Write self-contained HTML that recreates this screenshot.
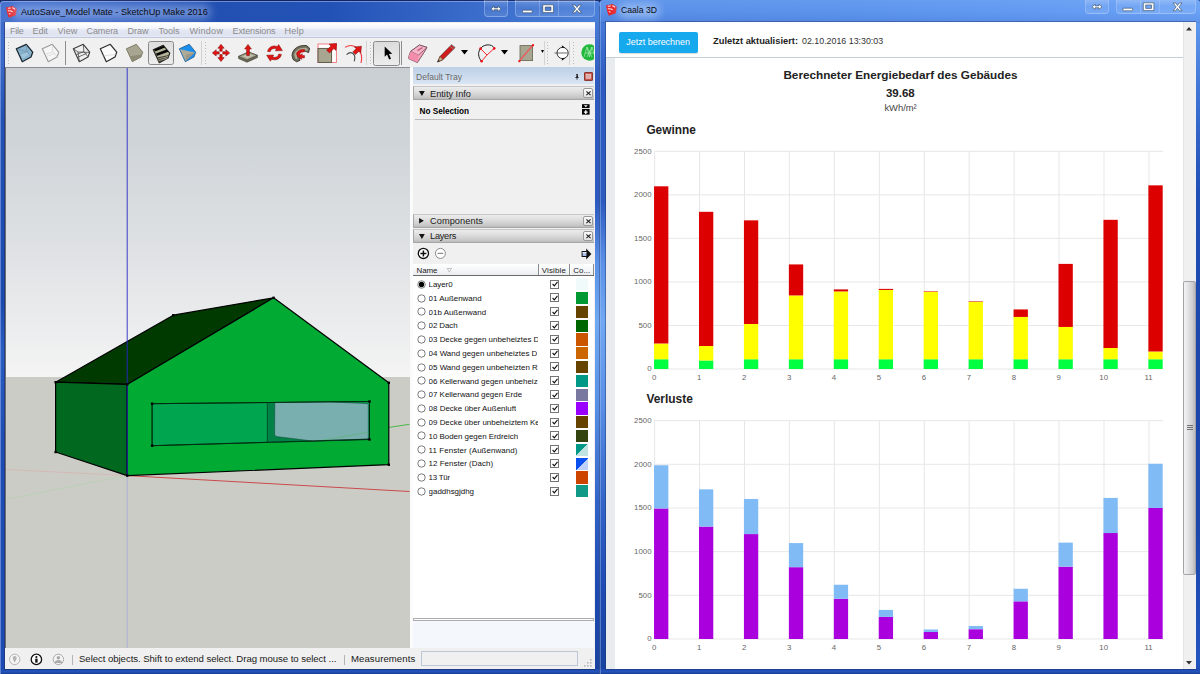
<!DOCTYPE html>
<html><head><meta charset="utf-8"><title>SketchUp Caala 3D</title>
<style>
html,body{margin:0;padding:0;}
body{width:1200px;height:674px;overflow:hidden;position:relative;background:#1a3a8c;font-family:"Liberation Sans", sans-serif;}
.t{position:absolute;white-space:nowrap;}
svg{position:absolute;overflow:visible;}
</style></head><body>
<div style="position:absolute;left:0.00px;top:0.00px;width:600.00px;height:674.00px;background:#10245e;"></div>
<div style="position:absolute;left:0.00px;top:0.00px;width:600.00px;height:674.00px;background:linear-gradient(90deg,#4873cf 0,#3b66c4 18%,#2250b2 36%,#2352b6 55%,#396bca 78%,#4a80da 100%);border-radius:4px 4px 0 0;"></div>
<div style="position:absolute;left:0.00px;top:22.00px;width:5.50px;height:652.00px;background:linear-gradient(180deg,#3f6bca 0,#3d69c8 40px,#2451b4 95px,#1c49ae 280px,#2a5cc4 330px,#1e4cb4 420px,#1d4ab2 100%);"></div>
<div style="position:absolute;left:594.30px;top:22.00px;width:5.70px;height:652.00px;background:linear-gradient(180deg,#467ad8 0,#2d5ac0 60px,#2c5abf 180px,#5a90e6 240px,#70a8f2 300px,#5a90e6 380px,#3264c8 480px,#1e4bb4 560px,#19429f 100%);"></div>
<div style="position:absolute;left:0.00px;top:669.00px;width:600.00px;height:5.00px;background:linear-gradient(180deg,#1f4cb2,#2553ba 60%,#183a90);"></div>
<div style="position:absolute;left:0.00px;top:0.00px;width:600.00px;height:674.00px;border-top:1px solid rgba(12,22,80,.8);border-radius:4px 4px 0 0;box-sizing:border-box;"></div>
<div style="position:absolute;left:0.00px;top:1.00px;width:600.00px;height:673.00px;border-top:1px solid rgba(170,195,245,.55);border-left:1px solid rgba(150,180,240,.55);border-radius:4px 4px 0 0;box-sizing:border-box;"></div>
<div style="position:absolute;left:599.30px;top:6.00px;width:0.90px;height:668.00px;background:rgba(60,80,130,.55);"></div>
<div style="position:absolute;left:4.40px;top:21.60px;width:590.40px;height:648.00px;border:1px solid rgba(30,45,100,.55);box-sizing:border-box;"></div>
<svg style="left:5.8px;top:6.0px" width="11" height="12" viewBox="0 0 11 12"><path d="M0 1.5 L6.8 0 L10.8 3 L9.8 9.3 L2.8 11.7 L1.2 7.6 Z" fill="#e8262a"/><path d="M1.8 2.3 L4.8 2 M6.2 1.8 C7.4 1.9 8.4 2.6 9 3.4" stroke="#fff" stroke-width="1.1" fill="none" opacity=".92"/><path d="M1.8 4.9 C3.4 4.6 5.4 5 6.6 5.8" stroke="#fff" stroke-width="1.1" fill="none" opacity=".92"/><path d="M2.8 7.6 L4.6 8" stroke="#fff" stroke-width="1" fill="none" opacity=".9"/></svg>
<div style="position:absolute;left:12.00px;top:5.00px;width:199.00px;height:14.00px;background:rgba(200,220,255,.40);filter:blur(4px);border-radius:8px;"></div>
<span class="t" id="t0" style="left:21.00px;top:5.70px;font-size:9.09px;line-height:13px;color:#0a0a14;">AutoSave_Model Mate - SketchUp Make 2016</span>
<div style="position:absolute;left:483.50px;top:0.00px;width:24.00px;height:16.50px;border:1px solid rgba(190,212,250,.38);border-top:none;border-radius:0 0 4px 4px;box-sizing:border-box;background:linear-gradient(180deg,rgba(255,255,255,.22),rgba(255,255,255,.05) 50%,rgba(255,255,255,.12));"></div><div style="position:absolute;left:515.00px;top:0.00px;width:80.00px;height:16.50px;border:1px solid rgba(190,212,250,.38);border-top:none;border-radius:0 0 4px 4px;box-sizing:border-box;background:linear-gradient(180deg,rgba(255,255,255,.22),rgba(255,255,255,.05) 50%,rgba(255,255,255,.12));"></div><div style="position:absolute;left:538.50px;top:0.00px;width:1.00px;height:15.50px;background:rgba(190,212,250,.32);"></div><div style="position:absolute;left:558.00px;top:0.00px;width:1.00px;height:15.50px;background:rgba(190,212,250,.32);"></div><svg style="left:483.5px;top:0.0px" width="113" height="18" viewBox="0 0 113 18" fill="#fff" stroke="#345" stroke-width=".6"><path d="M7.0 8.8 l3.2 -2.6 v1.7 h3.6 v-1.7 l3.2 2.6 l-3.2 2.6 v-1.7 h-3.6 v1.7 z"/><rect x="38.5" y="10.2" width="9.6" height="2.6" rx=".5"/><path fill-rule="evenodd" d="M58.8 4.8 h10.6 v7.8 h-10.6 z m2.4 2.2 v3.4 h5.8 v-3.4 z"/><path d="M88.5 5 h2.6 l1.9 2.5 l1.9 -2.5 h2.6 l-3.2 3.9 l3.2 3.9 h-2.6 l-1.9 -2.5 l-1.9 2.5 h-2.6 l3.2 -3.9 z"/></svg>
<div style="position:absolute;left:5.00px;top:22.00px;width:589.50px;height:647.00px;background:#f0f0f0;"></div>
<div style="position:absolute;left:5.00px;top:22.60px;width:589.50px;height:15.60px;background:linear-gradient(180deg,#ffffff 0,#f4f6fc 35%,#e4e8f4 50%,#dfe3f1 85%,#e6e9f5 100%);border-bottom:1px solid #c3c9dc;box-sizing:border-box;"></div>
<span class="t" id="t1" style="left:10.00px;top:24.90px;font-size:9.05px;line-height:13px;color:#8c8c8c;letter-spacing:-0.250px;">File</span>
<span class="t" id="t2" style="left:32.50px;top:24.90px;font-size:9.05px;line-height:13px;color:#8c8c8c;letter-spacing:-0.086px;">Edit</span>
<span class="t" id="t3" style="left:57.50px;top:24.90px;font-size:9.05px;line-height:13px;color:#8c8c8c;letter-spacing:0.133px;">View</span>
<span class="t" id="t4" style="left:86.50px;top:24.90px;font-size:9.05px;line-height:13px;color:#8c8c8c;letter-spacing:-0.116px;">Camera</span>
<span class="t" id="t5" style="left:127.50px;top:24.90px;font-size:9.05px;line-height:13px;color:#8c8c8c;">Draw</span>
<span class="t" id="t6" style="left:158.50px;top:24.90px;font-size:9.05px;line-height:13px;color:#8c8c8c;">Tools</span>
<span class="t" id="t7" style="left:189.50px;top:24.90px;font-size:9.05px;line-height:13px;color:#8c8c8c;letter-spacing:0.250px;">Window</span>
<span class="t" id="t8" style="left:232.50px;top:24.90px;font-size:9.05px;line-height:13px;color:#8c8c8c;letter-spacing:-0.129px;">Extensions</span>
<span class="t" id="t9" style="left:284.50px;top:24.90px;font-size:9.05px;line-height:13px;color:#8c8c8c;letter-spacing:0.220px;">Help</span>
<div style="position:absolute;left:5.00px;top:38.00px;width:589.50px;height:29.00px;background:#f0f0f0;"></div>
<div style="position:absolute;left:7.60px;top:41.50px;width:2.00px;height:23.00px;background:repeating-linear-gradient(180deg,#bcbcbc 0,#bcbcbc 1px,transparent 1px,transparent 3px);width:1.4px;"></div>
<svg style="left:16.0px;top:44.0px" width="17" height="18" viewBox="0 0 17 18" stroke-linejoin="round"><polygon points="0.3,4.8 10.3,0.3 16.7,8.2 15.0,13.0 6.3,17.7" fill="#8bb4cf" stroke="#1c2830" stroke-width="1.3"/><polygon points="4.5,9.5 10.8,7.6 12.8,11.0 6.6,14.0" fill="#9fc4dc"/><path d="M10.3 0.8 L10.8 7.6 L1 5 M10.8 7.6 L15 12.4 M2.9 10.4 L12 7.4" stroke="#6e93ad" stroke-width=".7" fill="none"/></svg>
<svg style="left:42.0px;top:44.0px" width="17" height="18" viewBox="0 0 17 18" stroke-linejoin="round"><polygon points="0.3,4.8 10.3,0.3 16.7,8.2 15.0,13.0 6.3,17.7" fill="#f6f6f6" stroke="#9a9a9a" stroke-width="1.1"/><path d="M10.3 0.8 L10.8 7.8 L3 10.4 M10.8 7.8 L15 12.6 M4.6 12.5 L13 9.2" stroke="#d2d2d2" stroke-width=".7" fill="none"/></svg>
<div style="position:absolute;left:65.20px;top:41.00px;width:1.00px;height:24.00px;background:#8e8e8e;"></div>
<svg style="left:73.0px;top:44.0px" width="17" height="18" viewBox="0 0 17 18" stroke-linejoin="round"><polygon points="0.3,4.8 10.3,0.3 16.7,8.2 15.0,13.0 6.3,17.7" fill="none" stroke="#3c3c3c" stroke-width="1.1"/><path d="M10.3 0.8 L10.9 7.6 L15 12.8 M10.9 7.6 L3.4 10.6 M0.6 5 L5 8 L6.3 17.4 M5 8 L16.4 8.4 M4.4 13.4 L13.6 9.4" stroke="#4a4a4a" stroke-width=".8" fill="none"/></svg>
<svg style="left:100.0px;top:44.0px" width="17" height="18" viewBox="0 0 17 18" stroke-linejoin="round"><polygon points="0.3,4.8 10.3,0.3 16.7,8.2 15.0,13.0 6.3,17.7" fill="#fbfbfb" stroke="#2a2a2a" stroke-width="1.2"/><path d="M3.6 11.8 L15.6 10.4" stroke="#d8d8d8" stroke-width=".8" fill="none"/></svg>
<svg style="left:126.0px;top:44.0px" width="17" height="18" viewBox="0 0 17 18" stroke-linejoin="round"><polygon points="0.3,4.8 10.3,0.3 16.7,8.2 15.0,13.0 6.3,17.7" fill="#a8a690" stroke="#77755f" stroke-width=".9"/><polygon points="3.8,12.2 15.6,10.6 15.0,13.0 6.3,17.7" fill="#8e8c76"/></svg>
<div style="position:absolute;left:148.10px;top:40.80px;width:25.80px;height:24.70px;background:linear-gradient(#dedede,#ececec);border:1px solid #8a8a8a;border-radius:2.5px;box-sizing:border-box;"></div>
<svg style="left:153.0px;top:44.6px" width="17" height="18" viewBox="0 0 17 18" stroke-linejoin="round"><polygon points="0.3,4.8 10.3,0.3 16.7,8.2 15.0,13.0 6.3,17.7" fill="#b5b39c" stroke="#20201a" stroke-width="1.1"/><path d="M1 4.6 L10.3 0.7 L12 2.6 L2 6.6 Z M3 8.6 L13.6 4.6 L15.4 6.8 L3.8 11 Z" fill="#060606"/><polygon points="4.2,12.6 15.8,10.0 15.0,13.0 6.3,17.7" fill="#3a382e"/><path d="M4.8 14 L15.2 11.4 M5.6 15.8 L14.6 13" stroke="#b5b39c" stroke-width=".8"/></svg>
<svg style="left:179.0px;top:44.0px" width="17" height="18" viewBox="0 0 17 18" stroke-linejoin="round"><polygon points="0.3,4.8 10.3,0.3 16.7,8.2 15.0,13.0 6.3,17.7" fill="#1b8fee" stroke="#1c5a8c" stroke-width=".8"/><polygon points="1.0,5.2 15.8,8.6 6.6,17.0" fill="#aeac98"/><polygon points="6.6,17.0 15.8,8.6 6.8,11.0" fill="#9a9884"/></svg>
<div style="position:absolute;left:200.80px;top:41.00px;width:1.00px;height:24.00px;background:#d2d2d2;"></div>
<div style="position:absolute;left:205.00px;top:41.50px;width:2.00px;height:23.00px;background:repeating-linear-gradient(180deg,#bcbcbc 0,#bcbcbc 1px,transparent 1px,transparent 3px);width:1.4px;"></div>
<svg style="left:212px;top:44px" width="18" height="18" viewBox="0 0 18 18"><g fill="#e01414" stroke="#7a0808" stroke-width=".5"><path d="M9 0.3 L12.2 4.2 H10.2 V7.2 H7.8 V4.2 H5.8 Z"/><path d="M9 17.5 L12.2 13.6 H10.2 V10.6 H7.8 V13.6 H5.8 Z"/><path d="M0.3 8.9 L4.2 5.7 V7.7 H7.2 V10.1 H4.2 V12.1 Z"/><path d="M17.7 8.9 L13.8 5.7 V7.7 H10.8 V10.1 H13.8 V12.1 Z"/></g></svg>
<svg style="left:237.5px;top:43.5px" width="20" height="19" viewBox="0 0 20 19"><polygon points="0.6,12.4 10.6,8 19.4,11.4 19.4,13.6 9,18.2 0.6,14.6" fill="#6e6c5a" stroke="#3a382e" stroke-width=".6"/><polygon points="0.6,12.4 10.6,8 19.4,11.4 9,16" fill="#a8a690" stroke="#3a382e" stroke-width=".6"/><polygon points="4.6,12.2 10.4,9.8 15.6,11.6 9.4,14.2" fill="#c4c2ae"/><path d="M10 0.4 L13.4 5 H11.4 V11.6 H8.6 V5 H6.6 Z" fill="#e01414" stroke="#7a0808" stroke-width=".5"/></svg>
<svg style="left:264.5px;top:44px" width="19" height="18" viewBox="0 0 19 18"><path d="M2.6 7.4 C3.4 3 8 0.8 12.4 2.6 L13.6 0.6 L17.4 6.6 L10.4 6.8 L11.4 4.8 C8.6 3.8 5.8 5 5.2 7.8 Z" fill="#e01414" stroke="#7a0808" stroke-width=".5"/><path d="M16.4 10.4 C15.6 14.8 11 17 6.6 15.2 L5.4 17.2 L1.6 11.2 L8.6 11 L7.6 13 C10.4 14 13.2 12.8 13.8 10 Z" fill="#e01414" stroke="#7a0808" stroke-width=".5"/></svg>
<svg style="left:290.5px;top:44px" width="20" height="19" viewBox="0 0 20 19"><path d="M1 11.5 C1.4 4.5 8 0.6 15.6 1.6 L18.6 4.2 L17.6 8.6 L14.6 7.4 C11 6.2 8 8 7.8 11.6 L9 16.4 L5.6 17.8 L2 15.4 Z" fill="#6e6c5a" stroke="#2a2820" stroke-width=".8"/><path d="M3.2 10.8 C4 6 9 3.2 15.2 3.8 L17 5.4 L16.4 7 C11 5 6.4 7.6 6 12.4 L6.6 15.6 L4.4 14.6 Z" fill="#aeac98"/><path d="M5.4 9.6 C7 5.6 11 5 14 5.8 L13.2 8 C11 7.6 9 8.4 8.2 10.6 L9.4 10.8 L11.4 9.8 L11 11.4 L13.6 11.6 L13.4 14 L10.6 13.8 L10.8 15.4 L6.4 12.6 Z" fill="#e01414" stroke="#7a0808" stroke-width=".4"/></svg>
<svg style="left:317px;top:43px" width="21" height="21" viewBox="0 0 21 21"><rect x="1" y="1" width="18.4" height="18.4" fill="#fff" stroke="#f07078" stroke-width=".9"/><rect x="1" y="5.4" width="13.6" height="14" fill="#a8a690" stroke="#55533f" stroke-width=".9"/><path d="M19.6 0.4 L19 7.4 L16.8 5.6 L12.6 10 L9.6 7.2 L14 3 L12 1.2 Z" fill="#e01414" stroke="#7a0808" stroke-width=".5"/></svg>
<svg style="left:343.5px;top:43.5px" width="20" height="20" viewBox="0 0 20 20"><path d="M1 3.4 C10 -2 20 6 17 19" fill="none" stroke="#ee3a40" stroke-width="1.1"/><path d="M2.6 10.6 C7 6.4 12.6 9.6 10.2 17.4" fill="none" stroke="#4a4a4a" stroke-width="1.1"/><path d="M17.4 2.2 L16.8 8.8 L14.8 7.2 L11.6 10.6 L8.8 8 L12.2 4.6 L10.4 3 Z" fill="#e01414" stroke="#7a0808" stroke-width=".5"/></svg>
<div style="position:absolute;left:366.30px;top:41.00px;width:1.00px;height:24.00px;background:#d2d2d2;"></div>
<div style="position:absolute;left:370.00px;top:41.50px;width:2.00px;height:23.00px;background:repeating-linear-gradient(180deg,#bcbcbc 0,#bcbcbc 1px,transparent 1px,transparent 3px);width:1.4px;"></div>
<div style="position:absolute;left:373.00px;top:40.80px;width:27.20px;height:24.80px;background:linear-gradient(#dcdcdc,#ececec);border:1px solid #8a8a8a;border-radius:2.5px;box-sizing:border-box;"></div>
<svg style="left:383.6px;top:46.2px" width="9.4" height="14.6" viewBox="0 0 11 17"><path d="M0.8 0.6 L0.8 12.6 L3.6 10 L6 15.8 L8.2 14.8 L5.8 9.2 L9.6 9 Z" fill="#000"/></svg>
<div style="position:absolute;left:401.30px;top:41.00px;width:1.00px;height:24.00px;background:#8e8e8e;"></div>
<svg style="left:408px;top:43.5px" width="20" height="20" viewBox="0 0 20 20" stroke-linejoin="round"><polygon points="0.8,12.4 2.6,7.4 11.4,1 19,3.4 16,8.6 9.4,18.6 0.8,14.8" fill="#f6a4bc" stroke="#5a3a44" stroke-width=".8"/><polygon points="2.6,7.4 11.4,1 19,3.4 10.4,11.2" fill="#f8b4c8" stroke="#5a3a44" stroke-width=".6"/><polygon points="0.8,12.4 2.6,7.4 10.4,11.2 9.4,18.6 0.8,14.8" fill="#f48cac"/><path d="M9.4 6.6 L14.4 3.6" stroke="#c06484" stroke-width="1.4"/></svg>
<svg style="left:436.5px;top:44px" width="19" height="19" viewBox="0 0 19 19"><path d="M0.6 18 L3 12.6 L14.6 0.8 L18 3.6 L6 15.6 Z" fill="#d41c1c" stroke="#4a1010" stroke-width=".7"/><path d="M0.6 18 L3 12.6 L6 15.6 Z" fill="#c8b48c" stroke="#4a3a20" stroke-width=".5"/><path d="M0.6 18 L1.6 15.8 L2.8 17 Z" fill="#222"/><path d="M13.2 2.4 L16.6 5.2 M14.6 0.8 L18 3.6" stroke="#8a8a8a" stroke-width="1"/></svg>
<svg style="left:461.0px;top:49.6px" width="7" height="4.6" viewBox="0 0 7 4.4"><path d="M0 0 H7 L3.5 4.4 Z" fill="#000"/></svg>
<svg style="left:476.5px;top:43.5px" width="19" height="19" viewBox="0 0 19 19"><path d="M4.4 17.2 C-1 11 1.6 2 10 0.9 C13.4 0.5 16 2 17.6 4" fill="none" stroke="#222" stroke-width="1"/><path d="M3.4 4.6 L10 11 L17.4 4.2 M10 11 L4.6 17.2" fill="none" stroke="#f02830" stroke-width="1"/><circle cx="3.6" cy="4.6" r="1.3" fill="#f01018"/><circle cx="17.2" cy="4.4" r="1.3" fill="#f01018"/><circle cx="4.6" cy="17.2" r="1.3" fill="#f01018"/></svg>
<svg style="left:500.7px;top:49.6px" width="7" height="4.6" viewBox="0 0 7 4.4"><path d="M0 0 H7 L3.5 4.4 Z" fill="#000"/></svg>
<svg style="left:517.5px;top:44px" width="17" height="19" viewBox="0 0 17 19"><rect x="2" y="1.6" width="12.6" height="15" fill="#a8a690" stroke="#66644f" stroke-width=".8"/><path d="M1.2 17.2 L15 1.2" stroke="#f03038" stroke-width="1.2"/><path d="M1.2 17.2 L15 1.2" stroke="#f8b0b4" stroke-width=".4"/><rect x="0.4" y="16.2" width="2" height="2" fill="#f01018"/><rect x="14" y="0.2" width="2" height="2" fill="#f01018"/></svg>
<svg style="left:540.6px;top:50.4px" width="3" height="3" viewBox="0 0 3 3"><path d="M0 0 H3 L1.5 3 Z" fill="#000"/></svg>
<div style="position:absolute;left:543.80px;top:41.00px;width:1.00px;height:24.00px;background:#d2d2d2;"></div>
<div style="position:absolute;left:547.00px;top:41.50px;width:2.00px;height:23.00px;background:repeating-linear-gradient(180deg,#bcbcbc 0,#bcbcbc 1px,transparent 1px,transparent 3px);width:1.4px;"></div>
<svg style="left:554.4px;top:43.6px" width="14" height="18" viewBox="0 0 14 18"><circle cx="8.6" cy="9" r="5.6" fill="#fff" stroke="#222" stroke-width=".9"/><path d="M0.6 9 H13.6" stroke="#444" stroke-width=".8"/><path d="M7.6 1.2 L11 3.4 L8.4 4 Z M7.6 16.8 L11 14.6 L8.4 14 Z" fill="#000"/></svg>
<div style="position:absolute;left:569.30px;top:41.00px;width:1.00px;height:24.00px;background:#d2d2d2;"></div>
<div style="position:absolute;left:572.50px;top:41.50px;width:2.00px;height:23.00px;background:repeating-linear-gradient(180deg,#bcbcbc 0,#bcbcbc 1px,transparent 1px,transparent 3px);width:1.4px;"></div>
<div style="position:absolute;left:581.40px;top:44.20px;width:12.90px;height:17.00px;overflow:hidden;"><svg style="left:0;top:0" width="17" height="17" viewBox="0 0 17 17"><circle cx="8.5" cy="8.5" r="8.2" fill="#22b83c"/><path d="M3 13 L6 3 L8.5 13 L11 3 L14 13 M4 9 H13 M6 3 L11 13 M11 3 L6 13" stroke="#b8f0c0" stroke-width=".6" fill="none"/></svg></div>
<div style="position:absolute;left:5.00px;top:67.00px;width:404.50px;height:581.00px;background:#ccccc6;overflow:hidden;border-top:1px solid #8a8d92;border-left:1px solid #6e6f73;box-sizing:border-box;"><div style="position:absolute;left:0.00px;top:0.00px;width:420.00px;height:309.00px;background:linear-gradient(180deg,#c9cfd3 0,#d0d5d9 25%,#dde0e3 55%,#ecedee 85%,#f4f4f4 100%);"></div></div>
<svg style="left:0;top:0" width="600" height="674" viewBox="0 0 600 674"><line x1="127.2" y1="475.6" x2="6" y2="469.5" stroke="#dca0a0" stroke-width=".9" stroke-dasharray="1 1"/><line x1="127.2" y1="475.6" x2="6" y2="499.3" stroke="#a0d4a0" stroke-width=".9" stroke-dasharray="1 1"/><line x1="127.2" y1="475.6" x2="127.2" y2="648" stroke="#a8a8dc" stroke-width=".8"/><line x1="127.2" y1="475.6" x2="409.5" y2="491.5" stroke="#c83c3c" stroke-width=".9"/><line x1="409.5" y1="424.3" x2="388.8" y2="427.4" stroke="#3cb43c" stroke-width=".9"/><polygon points="55.6,382.2 173.3,315.2 273.6,297.8 127.2,384.4" fill="#003a00" stroke="#000" stroke-width="1.2" stroke-linejoin="round"/><polygon points="55.6,382.2 127.2,384.4 127.2,475.6 55.6,452" fill="#00691f" stroke="#000" stroke-width="1.2" stroke-linejoin="round"/><polygon points="127.2,384.4 273.6,297.8 388.8,382.8 388.8,464.7 127.2,475.6" fill="#00aa33" stroke="#000" stroke-width="1.2" stroke-linejoin="round"/><polygon points="152.1,403.7 369.5,401.5 369.5,439.5 152.1,445.7" fill="#00a550" stroke="#002a10" stroke-width=".9"/><polygon points="267.3,402.6 274.8,402.5 274.6,434.5 276,436.5 312.5,441 267.3,442.4" fill="#008246"/><polygon points="274.8,402.5 330,401.9 367.5,403.6 368.3,405 368.3,439 312.5,441 276,436.5 274.6,434.5" fill="#7aafaf" stroke="#0c3c34" stroke-width=".5"/><line x1="368.3" y1="432.2" x2="322" y2="440.3" stroke="#58b478" stroke-width=".7"/><line x1="267.3" y1="402.6" x2="267.3" y2="442.4" stroke="#003a18" stroke-width=".7"/><polygon points="152.1,403.7 369.5,401.5 369.5,439.2 152.1,445.7" fill="none" stroke="#002a10" stroke-width=".9"/><line x1="127.2" y1="68" x2="127.2" y2="475.6" stroke="#2828c8" stroke-width=".9"/><rect x="54.4" y="381.0" width="2.4" height="2.4" fill="#000"/><rect x="54.4" y="450.8" width="2.4" height="2.4" fill="#000"/><rect x="126.0" y="383.2" width="2.4" height="2.4" fill="#000"/><rect x="126.0" y="474.4" width="2.4" height="2.4" fill="#000"/><rect x="172.1" y="314.0" width="2.4" height="2.4" fill="#000"/><rect x="272.4" y="296.6" width="2.4" height="2.4" fill="#000"/><rect x="387.6" y="381.6" width="2.4" height="2.4" fill="#000"/><rect x="387.6" y="463.5" width="2.4" height="2.4" fill="#000"/><rect x="150.9" y="402.5" width="2.4" height="2.4" fill="#000"/><rect x="150.9" y="444.5" width="2.4" height="2.4" fill="#000"/><rect x="368.3" y="400.3" width="2.4" height="2.4" fill="#000"/><rect x="368.3" y="438.3" width="2.4" height="2.4" fill="#000"/></svg>
<div style="position:absolute;left:409.50px;top:67.00px;width:3.50px;height:581.00px;background:#fbfbfb;"></div>
<div style="position:absolute;left:413.00px;top:67.30px;width:181.30px;height:581.00px;background:#f0f0f0;"></div>
<div style="position:absolute;left:413.00px;top:67.30px;width:181.30px;height:17.20px;background:linear-gradient(180deg,#bed0e5 0,#c9d9ec 45%,#d9e5f4 100%);"></div>
<span class="t" id="t10" style="left:416.00px;top:70.60px;font-size:8.53px;line-height:13px;color:#6a6a6a;">Default Tray</span>
<svg style="left:575.2px;top:73.6px" width="4" height="6" viewBox="0 0 6 9"><path d="M1.5 0.5 h3 v4 h1 v1 h-2 v3 h-1 v-3 h-2 v-1 h1 z" fill="#000"/><rect x="2.3" y="1.3" width="1" height="2.6" fill="#fff"/></svg>
<div style="position:absolute;left:584.00px;top:72.30px;width:8.60px;height:8.60px;background:#c9574d;border:1px solid #8d3a33;box-sizing:border-box;border-radius:1px;"><svg style="left:1px;top:1px" width="5" height="5" viewBox="0 0 5 5"><rect x="0.2" y="0.6" width="4.4" height="3.6" fill="#d9a9a4" stroke="#eedad8" stroke-width=".7"/></svg></div>
<div style="position:absolute;left:413.00px;top:86.40px;width:181.30px;height:13.60px;background:linear-gradient(180deg,#ececec 0,#dedede 40%,#c8c8c8 85%,#bababa 100%);border:1px solid #a6a6a6;border-top-color:#c8c8c8;border-right:none;box-sizing:border-box;"></div><svg style="left:419.2px;top:91.0px" width="5.8" height="5" viewBox="0 0 7 6"><path d="M0 0 h7 l-3.5 6 z" fill="#111"/></svg><span class="t" id="t11" style="left:430.00px;top:87.50px;font-size:9.22px;line-height:13px;color:#222;">Entity Info</span><div style="position:absolute;left:583.30px;top:88.20px;width:9.40px;height:9.80px;background:linear-gradient(#fafafa,#e2e2e2);border:1px solid #9a9a9a;border-radius:2px;box-sizing:border-box;"><svg style="left:1.7px;top:2.2px" width="5" height="4.4" viewBox="0 0 5 4.4"><path d="M0.4 0.3 L4.6 4.1 M4.6 0.3 L0.4 4.1" stroke="#222" stroke-width="1.1"/></svg></div>
<span class="t" id="t12" style="left:419.50px;top:105.60px;font-size:8.2px;line-height:12px;color:#000;font-weight:bold;">No Selection</span>
<svg style="left:582px;top:104.4px" width="7.6" height="10.8" viewBox="0 0 8 11"><rect x="0" y="0" width="8" height="4" fill="#000"/><path d="M2 1.2 h4 l-2 2 z" fill="#fff"/><rect x="0" y="5" width="8" height="6" fill="#000"/><path d="M3.3 6.3 h1.4 v1.3 h1.3 v1.4 h-1.3 v1.3 h-1.4 v-1.3 h-1.3 v-1.4 h1.3 z" fill="#fff"/></svg>
<div style="position:absolute;left:414.50px;top:119.30px;width:178.00px;height:1.00px;background:#bdbdbd;"></div>
<div style="position:absolute;left:413.00px;top:214.00px;width:181.30px;height:13.60px;background:linear-gradient(180deg,#ececec 0,#dedede 40%,#c8c8c8 85%,#bababa 100%);border:1px solid #a6a6a6;border-top-color:#c8c8c8;border-right:none;box-sizing:border-box;"></div><svg style="left:419.2px;top:218.4px" width="5" height="5.6" viewBox="0 0 6 7"><path d="M0 0 v7 l6 -3.5 z" fill="#111"/></svg><span class="t" id="t13" style="left:430.00px;top:215.10px;font-size:9.22px;line-height:13px;color:#222;letter-spacing:0.071px;">Components</span><div style="position:absolute;left:583.30px;top:215.80px;width:9.40px;height:9.80px;background:linear-gradient(#fafafa,#e2e2e2);border:1px solid #9a9a9a;border-radius:2px;box-sizing:border-box;"><svg style="left:1.7px;top:2.2px" width="5" height="4.4" viewBox="0 0 5 4.4"><path d="M0.4 0.3 L4.6 4.1 M4.6 0.3 L0.4 4.1" stroke="#222" stroke-width="1.1"/></svg></div>
<div style="position:absolute;left:413.00px;top:229.00px;width:181.30px;height:13.60px;background:linear-gradient(180deg,#ececec 0,#dedede 40%,#c8c8c8 85%,#bababa 100%);border:1px solid #a6a6a6;border-top-color:#c8c8c8;border-right:none;box-sizing:border-box;"></div><svg style="left:419.2px;top:233.6px" width="5.8" height="5" viewBox="0 0 7 6"><path d="M0 0 h7 l-3.5 6 z" fill="#111"/></svg><span class="t" id="t14" style="left:430.00px;top:230.10px;font-size:9.22px;line-height:13px;color:#222;letter-spacing:-0.250px;">Layers</span><div style="position:absolute;left:583.30px;top:230.80px;width:9.40px;height:9.80px;background:linear-gradient(#fafafa,#e2e2e2);border:1px solid #9a9a9a;border-radius:2px;box-sizing:border-box;"><svg style="left:1.7px;top:2.2px" width="5" height="4.4" viewBox="0 0 5 4.4"><path d="M0.4 0.3 L4.6 4.1 M4.6 0.3 L0.4 4.1" stroke="#222" stroke-width="1.1"/></svg></div>
<svg style="left:417px;top:247px" width="30" height="13" viewBox="0 0 30 13"><circle cx="6.4" cy="6.4" r="5.1" fill="#fff" stroke="#111" stroke-width="1.3"/><path d="M3.4 6.4 h6 M6.4 3.4 v6" stroke="#111" stroke-width="1.5"/><circle cx="23.4" cy="6.4" r="5" fill="#fff" stroke="#8a8a8a" stroke-width="1"/><path d="M20.6 6.4 h5.6" stroke="#8a8a8a" stroke-width="1.2"/></svg>
<svg style="left:580.5px;top:247.5px" width="11" height="12" viewBox="0 0 11 12"><path d="M0.6 3 h4.6 v-2.6 l5.2 5.6 l-5.2 5.6 v-2.6 h-4.6 z" fill="#111"/><rect x="1.6" y="4" width="3.8" height="4" fill="#a8c0e8"/><rect x="1.6" y="4" width="3.8" height="1.2" fill="#e8eef8"/></svg>
<div style="position:absolute;left:413.00px;top:264.00px;width:181.30px;height:354.50px;background:#fff;"></div>
<div style="position:absolute;left:413.00px;top:264.00px;width:181.30px;height:11.60px;background:linear-gradient(#ffffff,#f4f5f7 60%,#ebecef);border-bottom:1px solid #6a6a6a;box-sizing:border-box;"></div>
<div style="position:absolute;left:537.60px;top:264.00px;width:1.00px;height:11.00px;background:#8c8c8c;"></div>
<div style="position:absolute;left:538.60px;top:264.00px;width:1.00px;height:11.00px;background:#fff;"></div>
<div style="position:absolute;left:569.00px;top:264.00px;width:1.00px;height:11.00px;background:#8c8c8c;"></div>
<div style="position:absolute;left:570.00px;top:264.00px;width:1.00px;height:11.00px;background:#fff;"></div>
<div style="position:absolute;left:593.30px;top:264.00px;width:1.00px;height:11.00px;background:#8c8c8c;"></div>
<span class="t" id="t15" style="left:416.50px;top:264.80px;font-size:7.94px;line-height:12px;color:#222;letter-spacing:-0.047px;">Name</span>
<svg style="left:446.5px;top:267.5px" width="5" height="5" viewBox="0 0 5 5"><path d="M0.3 0.5 h4.2 l-2.1 3.6 z" fill="#fff" stroke="#999" stroke-width=".6"/></svg>
<span class="t" id="t16" style="left:541.70px;top:264.80px;font-size:7.94px;line-height:12px;color:#222;letter-spacing:0.173px;">Visible</span>
<span class="t" id="t17" style="left:573.30px;top:264.80px;font-size:7.94px;line-height:12px;color:#222;letter-spacing:0.013px;">Co...</span>
<svg style="left:417px;top:279.80px" width="9" height="9" viewBox="0 0 9 9"><circle cx="4.5" cy="4.5" r="3.8" fill="#fff" stroke="#666" stroke-width=".8"/><circle cx="4.5" cy="4.5" r="2.7" fill="#000"/></svg>
<span class="t" id="t18" style="left:428.60px;top:279.10px;font-size:7.94px;line-height:12px;color:#111;letter-spacing:-0.058px;max-width:109.5px;overflow:hidden;">Layer0</span>
<div style="position:absolute;left:550.00px;top:279.70px;width:9.00px;height:9.00px;background:#fff;border:1px solid #757575;box-sizing:border-box;"><svg style="left:0.6px;top:0.6px" width="6" height="6" viewBox="0 0 6 6"><path d="M0.6 3 L2.3 4.8 L5.5 0.8" stroke="#111" stroke-width="1.1" fill="none"/></svg></div>
<div style="position:absolute;left:576.00px;top:278.30px;width:12.40px;height:12.20px;background:#f0fafa;"></div>
<svg style="left:417px;top:293.59px" width="9" height="9" viewBox="0 0 9 9"><circle cx="4.5" cy="4.5" r="3.7" fill="#fff" stroke="#5a5a5a" stroke-width=".8"/></svg>
<span class="t" id="t19" style="left:428.60px;top:292.89px;font-size:7.94px;line-height:12px;color:#111;letter-spacing:0.002px;max-width:109.5px;overflow:hidden;">01 Außenwand</span>
<div style="position:absolute;left:550.00px;top:293.49px;width:9.00px;height:9.00px;background:#fff;border:1px solid #757575;box-sizing:border-box;"><svg style="left:0.6px;top:0.6px" width="6" height="6" viewBox="0 0 6 6"><path d="M0.6 3 L2.3 4.8 L5.5 0.8" stroke="#111" stroke-width="1.1" fill="none"/></svg></div>
<div style="position:absolute;left:576.00px;top:292.09px;width:12.40px;height:12.20px;background:#009933;"></div>
<svg style="left:417px;top:307.38px" width="9" height="9" viewBox="0 0 9 9"><circle cx="4.5" cy="4.5" r="3.7" fill="#fff" stroke="#5a5a5a" stroke-width=".8"/></svg>
<span class="t" id="t20" style="left:428.60px;top:306.68px;font-size:7.94px;line-height:12px;color:#111;letter-spacing:0.008px;max-width:109.5px;overflow:hidden;">01b Außenwand</span>
<div style="position:absolute;left:550.00px;top:307.28px;width:9.00px;height:9.00px;background:#fff;border:1px solid #757575;box-sizing:border-box;"><svg style="left:0.6px;top:0.6px" width="6" height="6" viewBox="0 0 6 6"><path d="M0.6 3 L2.3 4.8 L5.5 0.8" stroke="#111" stroke-width="1.1" fill="none"/></svg></div>
<div style="position:absolute;left:576.00px;top:305.88px;width:12.40px;height:12.20px;background:#664400;"></div>
<svg style="left:417px;top:321.17px" width="9" height="9" viewBox="0 0 9 9"><circle cx="4.5" cy="4.5" r="3.7" fill="#fff" stroke="#5a5a5a" stroke-width=".8"/></svg>
<span class="t" id="t21" style="left:428.60px;top:320.47px;font-size:7.94px;line-height:12px;color:#111;letter-spacing:-0.091px;max-width:109.5px;overflow:hidden;">02 Dach</span>
<div style="position:absolute;left:550.00px;top:321.07px;width:9.00px;height:9.00px;background:#fff;border:1px solid #757575;box-sizing:border-box;"><svg style="left:0.6px;top:0.6px" width="6" height="6" viewBox="0 0 6 6"><path d="M0.6 3 L2.3 4.8 L5.5 0.8" stroke="#111" stroke-width="1.1" fill="none"/></svg></div>
<div style="position:absolute;left:576.00px;top:319.67px;width:12.40px;height:12.20px;background:#006600;"></div>
<svg style="left:417px;top:334.96px" width="9" height="9" viewBox="0 0 9 9"><circle cx="4.5" cy="4.5" r="3.7" fill="#fff" stroke="#5a5a5a" stroke-width=".8"/></svg>
<span class="t" id="t22" style="left:428.60px;top:334.26px;font-size:7.94px;line-height:12px;color:#111;max-width:109.5px;overflow:hidden;">03 Decke gegen unbeheiztes D</span>
<div style="position:absolute;left:550.00px;top:334.86px;width:9.00px;height:9.00px;background:#fff;border:1px solid #757575;box-sizing:border-box;"><svg style="left:0.6px;top:0.6px" width="6" height="6" viewBox="0 0 6 6"><path d="M0.6 3 L2.3 4.8 L5.5 0.8" stroke="#111" stroke-width="1.1" fill="none"/></svg></div>
<div style="position:absolute;left:576.00px;top:333.46px;width:12.40px;height:12.20px;background:#cc5500;"></div>
<svg style="left:417px;top:348.75px" width="9" height="9" viewBox="0 0 9 9"><circle cx="4.5" cy="4.5" r="3.7" fill="#fff" stroke="#5a5a5a" stroke-width=".8"/></svg>
<span class="t" id="t23" style="left:428.60px;top:348.05px;font-size:7.94px;line-height:12px;color:#111;max-width:109.5px;overflow:hidden;">04 Wand gegen unbeheiztes D</span>
<div style="position:absolute;left:550.00px;top:348.65px;width:9.00px;height:9.00px;background:#fff;border:1px solid #757575;box-sizing:border-box;"><svg style="left:0.6px;top:0.6px" width="6" height="6" viewBox="0 0 6 6"><path d="M0.6 3 L2.3 4.8 L5.5 0.8" stroke="#111" stroke-width="1.1" fill="none"/></svg></div>
<div style="position:absolute;left:576.00px;top:347.25px;width:12.40px;height:12.20px;background:#cc6600;"></div>
<svg style="left:417px;top:362.54px" width="9" height="9" viewBox="0 0 9 9"><circle cx="4.5" cy="4.5" r="3.7" fill="#fff" stroke="#5a5a5a" stroke-width=".8"/></svg>
<span class="t" id="t24" style="left:428.60px;top:361.84px;font-size:7.94px;line-height:12px;color:#111;max-width:109.5px;overflow:hidden;">05 Wand gegen unbeheizten R</span>
<div style="position:absolute;left:550.00px;top:362.44px;width:9.00px;height:9.00px;background:#fff;border:1px solid #757575;box-sizing:border-box;"><svg style="left:0.6px;top:0.6px" width="6" height="6" viewBox="0 0 6 6"><path d="M0.6 3 L2.3 4.8 L5.5 0.8" stroke="#111" stroke-width="1.1" fill="none"/></svg></div>
<div style="position:absolute;left:576.00px;top:361.04px;width:12.40px;height:12.20px;background:#664400;"></div>
<svg style="left:417px;top:376.33px" width="9" height="9" viewBox="0 0 9 9"><circle cx="4.5" cy="4.5" r="3.7" fill="#fff" stroke="#5a5a5a" stroke-width=".8"/></svg>
<span class="t" id="t25" style="left:428.60px;top:375.63px;font-size:7.94px;line-height:12px;color:#111;max-width:109.5px;overflow:hidden;">06 Kellerwand gegen unbeheiz</span>
<div style="position:absolute;left:550.00px;top:376.23px;width:9.00px;height:9.00px;background:#fff;border:1px solid #757575;box-sizing:border-box;"><svg style="left:0.6px;top:0.6px" width="6" height="6" viewBox="0 0 6 6"><path d="M0.6 3 L2.3 4.8 L5.5 0.8" stroke="#111" stroke-width="1.1" fill="none"/></svg></div>
<div style="position:absolute;left:576.00px;top:374.83px;width:12.40px;height:12.20px;background:#009988;"></div>
<svg style="left:417px;top:390.12px" width="9" height="9" viewBox="0 0 9 9"><circle cx="4.5" cy="4.5" r="3.7" fill="#fff" stroke="#5a5a5a" stroke-width=".8"/></svg>
<span class="t" id="t26" style="left:428.60px;top:389.42px;font-size:7.94px;line-height:12px;color:#111;letter-spacing:-0.004px;max-width:109.5px;overflow:hidden;">07 Kellerwand gegen Erde</span>
<div style="position:absolute;left:550.00px;top:390.02px;width:9.00px;height:9.00px;background:#fff;border:1px solid #757575;box-sizing:border-box;"><svg style="left:0.6px;top:0.6px" width="6" height="6" viewBox="0 0 6 6"><path d="M0.6 3 L2.3 4.8 L5.5 0.8" stroke="#111" stroke-width="1.1" fill="none"/></svg></div>
<div style="position:absolute;left:576.00px;top:388.62px;width:12.40px;height:12.20px;background:#7878a0;"></div>
<svg style="left:417px;top:403.91px" width="9" height="9" viewBox="0 0 9 9"><circle cx="4.5" cy="4.5" r="3.7" fill="#fff" stroke="#5a5a5a" stroke-width=".8"/></svg>
<span class="t" id="t27" style="left:428.60px;top:403.21px;font-size:7.94px;line-height:12px;color:#111;letter-spacing:0.006px;max-width:109.5px;overflow:hidden;">08 Decke über Außenluft</span>
<div style="position:absolute;left:550.00px;top:403.81px;width:9.00px;height:9.00px;background:#fff;border:1px solid #757575;box-sizing:border-box;"><svg style="left:0.6px;top:0.6px" width="6" height="6" viewBox="0 0 6 6"><path d="M0.6 3 L2.3 4.8 L5.5 0.8" stroke="#111" stroke-width="1.1" fill="none"/></svg></div>
<div style="position:absolute;left:576.00px;top:402.41px;width:12.40px;height:12.20px;background:#9900ff;"></div>
<svg style="left:417px;top:417.70px" width="9" height="9" viewBox="0 0 9 9"><circle cx="4.5" cy="4.5" r="3.7" fill="#fff" stroke="#5a5a5a" stroke-width=".8"/></svg>
<span class="t" id="t28" style="left:428.60px;top:417.00px;font-size:7.94px;line-height:12px;color:#111;max-width:109.5px;overflow:hidden;">09 Decke über unbeheiztem Ke</span>
<div style="position:absolute;left:550.00px;top:417.60px;width:9.00px;height:9.00px;background:#fff;border:1px solid #757575;box-sizing:border-box;"><svg style="left:0.6px;top:0.6px" width="6" height="6" viewBox="0 0 6 6"><path d="M0.6 3 L2.3 4.8 L5.5 0.8" stroke="#111" stroke-width="1.1" fill="none"/></svg></div>
<div style="position:absolute;left:576.00px;top:416.20px;width:12.40px;height:12.20px;background:#664400;"></div>
<svg style="left:417px;top:431.49px" width="9" height="9" viewBox="0 0 9 9"><circle cx="4.5" cy="4.5" r="3.7" fill="#fff" stroke="#5a5a5a" stroke-width=".8"/></svg>
<span class="t" id="t29" style="left:428.60px;top:430.79px;font-size:7.94px;line-height:12px;color:#111;letter-spacing:-0.024px;max-width:109.5px;overflow:hidden;">10 Boden gegen Erdreich</span>
<div style="position:absolute;left:550.00px;top:431.39px;width:9.00px;height:9.00px;background:#fff;border:1px solid #757575;box-sizing:border-box;"><svg style="left:0.6px;top:0.6px" width="6" height="6" viewBox="0 0 6 6"><path d="M0.6 3 L2.3 4.8 L5.5 0.8" stroke="#111" stroke-width="1.1" fill="none"/></svg></div>
<div style="position:absolute;left:576.00px;top:429.99px;width:12.40px;height:12.20px;background:#334411;"></div>
<svg style="left:417px;top:445.28px" width="9" height="9" viewBox="0 0 9 9"><circle cx="4.5" cy="4.5" r="3.7" fill="#fff" stroke="#5a5a5a" stroke-width=".8"/></svg>
<span class="t" id="t30" style="left:428.60px;top:444.58px;font-size:7.94px;line-height:12px;color:#111;letter-spacing:0.080px;max-width:109.5px;overflow:hidden;">11 Fenster (Außenwand)</span>
<div style="position:absolute;left:550.00px;top:445.18px;width:9.00px;height:9.00px;background:#fff;border:1px solid #757575;box-sizing:border-box;"><svg style="left:0.6px;top:0.6px" width="6" height="6" viewBox="0 0 6 6"><path d="M0.6 3 L2.3 4.8 L5.5 0.8" stroke="#111" stroke-width="1.1" fill="none"/></svg></div>
<div style="position:absolute;left:576.00px;top:443.78px;width:12.40px;height:12.20px;background:linear-gradient(135deg,#009988 50%,#bfe3e3 50%);"></div>
<svg style="left:417px;top:459.07px" width="9" height="9" viewBox="0 0 9 9"><circle cx="4.5" cy="4.5" r="3.7" fill="#fff" stroke="#5a5a5a" stroke-width=".8"/></svg>
<span class="t" id="t31" style="left:428.60px;top:458.37px;font-size:7.94px;line-height:12px;color:#111;letter-spacing:0.030px;max-width:109.5px;overflow:hidden;">12 Fenster (Dach)</span>
<div style="position:absolute;left:550.00px;top:458.97px;width:9.00px;height:9.00px;background:#fff;border:1px solid #757575;box-sizing:border-box;"><svg style="left:0.6px;top:0.6px" width="6" height="6" viewBox="0 0 6 6"><path d="M0.6 3 L2.3 4.8 L5.5 0.8" stroke="#111" stroke-width="1.1" fill="none"/></svg></div>
<div style="position:absolute;left:576.00px;top:457.57px;width:12.40px;height:12.20px;background:linear-gradient(135deg,#0a50f0 50%,#bfd0fa 50%);"></div>
<svg style="left:417px;top:472.86px" width="9" height="9" viewBox="0 0 9 9"><circle cx="4.5" cy="4.5" r="3.7" fill="#fff" stroke="#5a5a5a" stroke-width=".8"/></svg>
<span class="t" id="t32" style="left:428.60px;top:472.16px;font-size:7.94px;line-height:12px;color:#111;letter-spacing:-0.250px;max-width:109.5px;overflow:hidden;">13 Tür</span>
<div style="position:absolute;left:550.00px;top:472.76px;width:9.00px;height:9.00px;background:#fff;border:1px solid #757575;box-sizing:border-box;"><svg style="left:0.6px;top:0.6px" width="6" height="6" viewBox="0 0 6 6"><path d="M0.6 3 L2.3 4.8 L5.5 0.8" stroke="#111" stroke-width="1.1" fill="none"/></svg></div>
<div style="position:absolute;left:576.00px;top:471.36px;width:12.40px;height:12.20px;background:#cc4400;"></div>
<svg style="left:417px;top:486.65px" width="9" height="9" viewBox="0 0 9 9"><circle cx="4.5" cy="4.5" r="3.7" fill="#fff" stroke="#5a5a5a" stroke-width=".8"/></svg>
<span class="t" id="t33" style="left:428.60px;top:485.95px;font-size:7.94px;line-height:12px;color:#111;letter-spacing:-0.002px;max-width:109.5px;overflow:hidden;">gaddhsgjdhg</span>
<div style="position:absolute;left:550.00px;top:486.55px;width:9.00px;height:9.00px;background:#fff;border:1px solid #757575;box-sizing:border-box;"><svg style="left:0.6px;top:0.6px" width="6" height="6" viewBox="0 0 6 6"><path d="M0.6 3 L2.3 4.8 L5.5 0.8" stroke="#111" stroke-width="1.1" fill="none"/></svg></div>
<div style="position:absolute;left:576.00px;top:485.15px;width:12.40px;height:12.20px;background:#119988;"></div>
<div style="position:absolute;left:413.00px;top:618.50px;width:181.30px;height:29.50px;background:#f4f7fc;"></div>
<div style="position:absolute;left:413.30px;top:618.30px;width:181.00px;height:3.00px;background:#fff;border:1px solid #adadad;box-sizing:border-box;"></div>
<div style="position:absolute;left:5.00px;top:648.00px;width:589.50px;height:21.00px;background:#f0f0f0;"></div>
<svg style="left:8px;top:653px" width="60" height="13" viewBox="0 0 60 13"><circle cx="6.7" cy="6.4" r="5.2" fill="#f4f4f4" stroke="#b4b4b4" stroke-width="1"/><path d="M6.7 3 a2 2 0 0 1 2 2 c0 1.4 -2 4.4 -2 4.4 s-2 -3 -2 -4.4 a2 2 0 0 1 2 -2 z" fill="#b4b4b4"/><circle cx="28.4" cy="6.4" r="5.2" fill="#fff" stroke="#111" stroke-width="1.3"/><circle cx="28.4" cy="4" r="1.1" fill="#111"/><path d="M27.2 5.6 h2.4 v4 h-2.4 z" fill="#111"/><circle cx="50.4" cy="6.4" r="5.2" fill="#f4f4f4" stroke="#aaa" stroke-width="1"/><circle cx="50.4" cy="4.8" r="1.8" fill="#aaa"/><path d="M46.8 10 a3.6 3 0 0 1 7.2 0 z" fill="#aaa"/></svg>
<div style="position:absolute;left:72.00px;top:654.50px;width:1.00px;height:10.00px;background:#b4b4b4;"></div>
<span class="t" id="t34" style="left:79.00px;top:652.30px;font-size:9.61px;line-height:14px;color:#1a1a1a;letter-spacing:-0.052px;">Select objects. Shift to extend select. Drag mouse to select ...</span>
<div style="position:absolute;left:344.00px;top:654.50px;width:1.00px;height:10.00px;background:#b4b4b4;"></div>
<span class="t" id="t35" style="left:351.00px;top:652.30px;font-size:9.61px;line-height:14px;color:#1a1a1a;letter-spacing:0.067px;">Measurements</span>
<div style="position:absolute;left:421.00px;top:651.30px;width:157.00px;height:14.80px;background:#f0f0f0;border:1px solid #bcc7d8;box-sizing:border-box;"></div>
<svg style="left:583px;top:658px" width="10" height="10" viewBox="0 0 10 10" fill="#b8b8b8"><rect x="7" y="1" width="1.6" height="1.6"/><rect x="4" y="4" width="1.6" height="1.6"/><rect x="7" y="4" width="1.6" height="1.6"/><rect x="1" y="7" width="1.6" height="1.6"/><rect x="4" y="7" width="1.6" height="1.6"/><rect x="7" y="7" width="1.6" height="1.6"/></svg>
<div style="position:absolute;left:600.00px;top:0.00px;width:600.00px;height:674.00px;background:#10245e;"></div>
<div style="position:absolute;left:600.00px;top:0.00px;width:600.00px;height:674.00px;background:linear-gradient(90deg,#588fe8 0,#5c94ec 40%,#6199f1 65%,#6aa2f6 100%);border-radius:3px 2px 0 0;"></div>
<div style="position:absolute;left:600.00px;top:22.00px;width:5.70px;height:652.00px;background:linear-gradient(180deg,#467ad8 0,#2d5ac0 60px,#2c5abf 180px,#5a90e6 240px,#70a8f2 300px,#5a90e6 380px,#3264c8 480px,#1e4bb4 560px,#19429f 100%);"></div>
<div style="position:absolute;left:1195.60px;top:22.00px;width:4.40px;height:652.00px;background:linear-gradient(180deg,#5e98ee 0,#3c70d2 80px,#2050b6 170px,#1c46ac 330px,#1b45aa 500px,#2355c0 640px,#1d48ac 100%);"></div>
<div style="position:absolute;left:600.00px;top:669.00px;width:600.00px;height:5.00px;background:linear-gradient(180deg,#1f4cb2,#2553ba 60%,#183a90);"></div>
<div style="position:absolute;left:600.00px;top:0.00px;width:600.00px;height:22.50px;background:linear-gradient(180deg,rgba(255,255,255,.06) 0,rgba(0,0,80,.0) 50%,rgba(0,20,120,.10) 100%);border-radius:3px 2px 0 0;"></div>
<div style="position:absolute;left:600.00px;top:0.00px;width:600.00px;height:674.00px;border-left:1px solid rgba(170,200,250,.40);border-radius:3px 2px 0 0;box-sizing:border-box;"></div>
<div style="position:absolute;left:605.00px;top:20.90px;width:591.40px;height:648.90px;border:1px solid rgba(30,50,110,.45);box-sizing:border-box;"></div>
<svg style="left:606.2px;top:4.4px" width="11" height="12" viewBox="0 0 11 12"><path d="M0 1.5 L6.8 0 L10.8 3 L9.8 9.3 L2.8 11.7 L1.2 7.6 Z" fill="#e8262a"/><path d="M1.8 2.3 L4.8 2 M6.2 1.8 C7.4 1.9 8.4 2.6 9 3.4" stroke="#fff" stroke-width="1.1" fill="none" opacity=".92"/><path d="M1.8 4.9 C3.4 4.6 5.4 5 6.6 5.8" stroke="#fff" stroke-width="1.1" fill="none" opacity=".92"/><path d="M2.8 7.6 L4.6 8" stroke="#fff" stroke-width="1" fill="none" opacity=".9"/></svg>
<div style="position:absolute;left:618.00px;top:4.00px;width:42.00px;height:14.00px;background:rgba(225,238,255,.42);filter:blur(4px);border-radius:8px;"></div>
<span class="t" id="t36" style="left:621.00px;top:4.30px;font-size:8.63px;line-height:13px;color:#0a0a14;">Caala 3D</span>
<div style="position:absolute;left:1085.00px;top:0.00px;width:24.00px;height:14.00px;border:1px solid rgba(190,212,250,.38);border-top:none;border-radius:0 0 4px 4px;box-sizing:border-box;background:linear-gradient(180deg,rgba(255,255,255,.22),rgba(255,255,255,.05) 50%,rgba(255,255,255,.12));"></div><div style="position:absolute;left:1116.00px;top:0.00px;width:80.00px;height:14.00px;border:1px solid rgba(190,212,250,.38);border-top:none;border-radius:0 0 4px 4px;box-sizing:border-box;background:linear-gradient(180deg,rgba(255,255,255,.22),rgba(255,255,255,.05) 50%,rgba(255,255,255,.12));"></div><div style="position:absolute;left:1139.50px;top:0.00px;width:1.00px;height:13.00px;background:rgba(190,212,250,.32);"></div><div style="position:absolute;left:1159.00px;top:0.00px;width:1.00px;height:13.00px;background:rgba(190,212,250,.32);"></div><svg style="left:1085.0px;top:-1.9px" width="113" height="18" viewBox="0 0 113 18" fill="#fff" stroke="#345" stroke-width=".6"><path d="M7.0 8.8 l3.2 -2.6 v1.7 h3.6 v-1.7 l3.2 2.6 l-3.2 2.6 v-1.7 h-3.6 v1.7 z"/><rect x="38.0" y="10.2" width="9.6" height="2.6" rx=".5"/><path fill-rule="evenodd" d="M58.3 4.8 h10.6 v7.8 h-10.6 z m2.4 2.2 v3.4 h5.8 v-3.4 z"/><path d="M88.0 5 h2.6 l1.9 2.5 l1.9 -2.5 h2.6 l-3.2 3.9 l3.2 3.9 h-2.6 l-1.9 -2.5 l-1.9 2.5 h-2.6 l3.2 -3.9 z"/></svg>
<div style="position:absolute;left:605.60px;top:22.00px;width:590.20px;height:647.20px;background:#fff;"></div>
<div style="position:absolute;left:605.60px;top:58.00px;width:9.00px;height:611.20px;background:#e8ecef;"></div>
<div style="position:absolute;left:605.60px;top:57.20px;width:577.40px;height:1.00px;background:#c5ced6;"></div>
<div style="position:absolute;left:619.00px;top:31.70px;width:79.00px;height:21.40px;background:#16a9ee;border-radius:2px;box-shadow:0 1px 1px rgba(0,0,0,.15);"></div>
<span class="t" id="t37" style="left:626.30px;top:35.70px;font-size:8.96px;line-height:13px;color:#fff;">Jetzt berechnen</span>
<span class="t" id="t38" style="left:713.00px;top:35.10px;font-size:9.34px;line-height:13px;color:#222;font-weight:bold;">Zuletzt aktualisiert:</span>
<span class="t" id="t39" style="left:802.00px;top:35.10px;font-size:8.86px;line-height:13px;color:#333;">02.10.2016 13:30:03</span>
<div style="position:absolute;left:1183.00px;top:22.00px;width:12.80px;height:647.20px;background:#f0f0f0;border-left:1px solid #e4e4e4;box-sizing:border-box;"></div>
<div style="position:absolute;left:1183.40px;top:280.50px;width:12.40px;height:294.70px;background:linear-gradient(90deg,#f4f4f4 0,#e4e4e6 35%,#cfcfd2 75%,#b9b9bc 100%);border:1px solid #a4a4a8;border-radius:2px;box-sizing:border-box;"></div>
<svg style="left:1186.5px;top:425px" width="6" height="6" viewBox="0 0 6 6"><path d="M0 0.5 H6 M0 2.5 H6 M0 4.5 H6" stroke="#555" stroke-width=".8"/></svg>
<svg style="left:1186.3px;top:26.6px" width="6" height="3.4" viewBox="0 0 6 3.4"><path d="M0 3.4 H6 L3 0 Z" fill="#333"/></svg>
<svg style="left:1186.3px;top:660.8px" width="6" height="3.4" viewBox="0 0 6 3.4"><path d="M0 0 H6 L3 3.4 Z" fill="#333"/></svg>
<span class="t" id="t40" style="left:783.40px;top:67.00px;font-size:11.74px;line-height:16px;color:#222;font-weight:bold;">Berechneter Energiebedarf des Gebäudes</span>
<span class="t" id="t41" style="left:885.90px;top:85.00px;font-size:11.51px;line-height:16px;color:#222;font-weight:bold;">39.68</span>
<span class="t" id="t42" style="left:884.40px;top:102.30px;font-size:9.38px;line-height:13px;color:#444;">kWh/m²</span>
<span class="t" id="t43" style="left:646.40px;top:122.00px;font-size:11.85px;line-height:16px;color:#222;font-weight:bold;">Gewinne</span>
<span class="t" id="t44" style="left:646.40px;top:391.40px;font-size:11.94px;line-height:16px;color:#222;font-weight:bold;">Verluste</span>
<svg style="left:0;top:0" width="1200" height="674" viewBox="0 0 1200 674"><line x1="654.6" y1="369.00" x2="1163.0" y2="369.00" stroke="#e7e7e7" stroke-width="1"/><line x1="654.6" y1="325.46" x2="1163.0" y2="325.46" stroke="#e7e7e7" stroke-width="1"/><line x1="654.6" y1="281.92" x2="1163.0" y2="281.92" stroke="#e7e7e7" stroke-width="1"/><line x1="654.6" y1="238.38" x2="1163.0" y2="238.38" stroke="#e7e7e7" stroke-width="1"/><line x1="654.6" y1="194.84" x2="1163.0" y2="194.84" stroke="#e7e7e7" stroke-width="1"/><line x1="654.6" y1="151.30" x2="1163.0" y2="151.30" stroke="#e7e7e7" stroke-width="1"/><line x1="654.60" y1="151.30" x2="654.60" y2="369.00" stroke="#e7e7e7" stroke-width="1"/><line x1="699.54" y1="151.30" x2="699.54" y2="369.00" stroke="#e7e7e7" stroke-width="1"/><line x1="744.48" y1="151.30" x2="744.48" y2="369.00" stroke="#e7e7e7" stroke-width="1"/><line x1="789.42" y1="151.30" x2="789.42" y2="369.00" stroke="#e7e7e7" stroke-width="1"/><line x1="834.36" y1="151.30" x2="834.36" y2="369.00" stroke="#e7e7e7" stroke-width="1"/><line x1="879.30" y1="151.30" x2="879.30" y2="369.00" stroke="#e7e7e7" stroke-width="1"/><line x1="924.24" y1="151.30" x2="924.24" y2="369.00" stroke="#e7e7e7" stroke-width="1"/><line x1="969.18" y1="151.30" x2="969.18" y2="369.00" stroke="#e7e7e7" stroke-width="1"/><line x1="1014.12" y1="151.30" x2="1014.12" y2="369.00" stroke="#e7e7e7" stroke-width="1"/><line x1="1059.06" y1="151.30" x2="1059.06" y2="369.00" stroke="#e7e7e7" stroke-width="1"/><line x1="1104.00" y1="151.30" x2="1104.00" y2="369.00" stroke="#e7e7e7" stroke-width="1"/><line x1="1148.94" y1="151.30" x2="1148.94" y2="369.00" stroke="#e7e7e7" stroke-width="1"/><rect x="654.05" y="359.25" width="14.30" height="9.75" fill="#00ff40"/><rect x="654.05" y="343.49" width="14.30" height="15.76" fill="#ffff00"/><rect x="654.05" y="186.31" width="14.30" height="157.18" fill="#dd0000"/><rect x="698.99" y="360.47" width="14.30" height="8.53" fill="#00ff40"/><rect x="698.99" y="346.01" width="14.30" height="14.46" fill="#ffff00"/><rect x="698.99" y="211.82" width="14.30" height="134.19" fill="#dd0000"/><rect x="743.93" y="359.25" width="14.30" height="9.75" fill="#00ff40"/><rect x="743.93" y="323.98" width="14.30" height="35.27" fill="#ffff00"/><rect x="743.93" y="220.35" width="14.30" height="103.63" fill="#dd0000"/><rect x="788.87" y="359.25" width="14.30" height="9.75" fill="#00ff40"/><rect x="788.87" y="295.42" width="14.30" height="63.83" fill="#ffff00"/><rect x="788.87" y="264.42" width="14.30" height="31.00" fill="#dd0000"/><rect x="833.81" y="359.25" width="14.30" height="9.75" fill="#00ff40"/><rect x="833.81" y="291.41" width="14.30" height="67.84" fill="#ffff00"/><rect x="833.81" y="289.41" width="14.30" height="2.00" fill="#dd0000"/><rect x="878.75" y="359.25" width="14.30" height="9.75" fill="#00ff40"/><rect x="878.75" y="289.93" width="14.30" height="69.32" fill="#ffff00"/><rect x="878.75" y="288.89" width="14.30" height="1.04" fill="#dd0000"/><rect x="923.69" y="359.25" width="14.30" height="9.75" fill="#00ff40"/><rect x="923.69" y="291.85" width="14.30" height="67.40" fill="#ffff00"/><rect x="923.69" y="291.32" width="14.30" height="0.52" fill="#dd0000"/><rect x="968.63" y="359.25" width="14.30" height="9.75" fill="#00ff40"/><rect x="968.63" y="301.86" width="14.30" height="57.39" fill="#ffff00"/><rect x="968.63" y="301.34" width="14.30" height="0.52" fill="#dd0000"/><rect x="1013.57" y="359.25" width="14.30" height="9.75" fill="#00ff40"/><rect x="1013.57" y="316.93" width="14.30" height="42.32" fill="#ffff00"/><rect x="1013.57" y="309.44" width="14.30" height="7.49" fill="#dd0000"/><rect x="1058.51" y="359.25" width="14.30" height="9.75" fill="#00ff40"/><rect x="1058.51" y="326.94" width="14.30" height="32.31" fill="#ffff00"/><rect x="1058.51" y="263.89" width="14.30" height="63.05" fill="#dd0000"/><rect x="1103.45" y="359.25" width="14.30" height="9.75" fill="#00ff40"/><rect x="1103.45" y="348.01" width="14.30" height="11.23" fill="#ffff00"/><rect x="1103.45" y="219.83" width="14.30" height="128.18" fill="#dd0000"/><rect x="1148.39" y="359.25" width="14.30" height="9.75" fill="#00ff40"/><rect x="1148.39" y="351.50" width="14.30" height="7.75" fill="#ffff00"/><rect x="1148.39" y="185.35" width="14.30" height="166.15" fill="#dd0000"/></svg><span class="t" id="t45" style="left:0.00px;top:363.30px;font-size:7.82px;line-height:12px;color:#666;left:auto;right:548.5px;text-align:right;">0</span><span class="t" id="t46" style="left:0.00px;top:319.76px;font-size:7.82px;line-height:12px;color:#666;left:auto;right:548.5px;text-align:right;">500</span><span class="t" id="t47" style="left:0.00px;top:276.22px;font-size:7.82px;line-height:12px;color:#666;left:auto;right:548.5px;text-align:right;">1000</span><span class="t" id="t48" style="left:0.00px;top:232.68px;font-size:7.82px;line-height:12px;color:#666;left:auto;right:548.5px;text-align:right;">1500</span><span class="t" id="t49" style="left:0.00px;top:189.14px;font-size:7.82px;line-height:12px;color:#666;left:auto;right:548.5px;text-align:right;">2000</span><span class="t" id="t50" style="left:0.00px;top:145.60px;font-size:7.82px;line-height:12px;color:#666;left:auto;right:548.5px;text-align:right;">2500</span><span class="t" id="t51" style="left:634.30px;top:372.20px;font-size:7.82px;line-height:12px;color:#666;width:40px;text-align:center;">0</span><span class="t" id="t52" style="left:679.24px;top:372.20px;font-size:7.82px;line-height:12px;color:#666;width:40px;text-align:center;">1</span><span class="t" id="t53" style="left:724.18px;top:372.20px;font-size:7.82px;line-height:12px;color:#666;width:40px;text-align:center;">2</span><span class="t" id="t54" style="left:769.12px;top:372.20px;font-size:7.82px;line-height:12px;color:#666;width:40px;text-align:center;">3</span><span class="t" id="t55" style="left:814.06px;top:372.20px;font-size:7.82px;line-height:12px;color:#666;width:40px;text-align:center;">4</span><span class="t" id="t56" style="left:859.00px;top:372.20px;font-size:7.82px;line-height:12px;color:#666;width:40px;text-align:center;">5</span><span class="t" id="t57" style="left:903.94px;top:372.20px;font-size:7.82px;line-height:12px;color:#666;width:40px;text-align:center;">6</span><span class="t" id="t58" style="left:948.88px;top:372.20px;font-size:7.82px;line-height:12px;color:#666;width:40px;text-align:center;">7</span><span class="t" id="t59" style="left:993.82px;top:372.20px;font-size:7.82px;line-height:12px;color:#666;width:40px;text-align:center;">8</span><span class="t" id="t60" style="left:1038.76px;top:372.20px;font-size:7.82px;line-height:12px;color:#666;width:40px;text-align:center;">9</span><span class="t" id="t61" style="left:1083.70px;top:372.20px;font-size:7.82px;line-height:12px;color:#666;width:40px;text-align:center;">10</span><span class="t" id="t62" style="left:1128.64px;top:372.20px;font-size:7.82px;line-height:12px;color:#666;width:40px;text-align:center;">11</span>
<svg style="left:0;top:0" width="1200" height="674" viewBox="0 0 1200 674"><line x1="654.6" y1="639.00" x2="1163.0" y2="639.00" stroke="#e7e7e7" stroke-width="1"/><line x1="654.6" y1="595.32" x2="1163.0" y2="595.32" stroke="#e7e7e7" stroke-width="1"/><line x1="654.6" y1="551.64" x2="1163.0" y2="551.64" stroke="#e7e7e7" stroke-width="1"/><line x1="654.6" y1="507.96" x2="1163.0" y2="507.96" stroke="#e7e7e7" stroke-width="1"/><line x1="654.6" y1="464.28" x2="1163.0" y2="464.28" stroke="#e7e7e7" stroke-width="1"/><line x1="654.6" y1="420.60" x2="1163.0" y2="420.60" stroke="#e7e7e7" stroke-width="1"/><line x1="654.60" y1="420.60" x2="654.60" y2="639.00" stroke="#e7e7e7" stroke-width="1"/><line x1="699.54" y1="420.60" x2="699.54" y2="639.00" stroke="#e7e7e7" stroke-width="1"/><line x1="744.48" y1="420.60" x2="744.48" y2="639.00" stroke="#e7e7e7" stroke-width="1"/><line x1="789.42" y1="420.60" x2="789.42" y2="639.00" stroke="#e7e7e7" stroke-width="1"/><line x1="834.36" y1="420.60" x2="834.36" y2="639.00" stroke="#e7e7e7" stroke-width="1"/><line x1="879.30" y1="420.60" x2="879.30" y2="639.00" stroke="#e7e7e7" stroke-width="1"/><line x1="924.24" y1="420.60" x2="924.24" y2="639.00" stroke="#e7e7e7" stroke-width="1"/><line x1="969.18" y1="420.60" x2="969.18" y2="639.00" stroke="#e7e7e7" stroke-width="1"/><line x1="1014.12" y1="420.60" x2="1014.12" y2="639.00" stroke="#e7e7e7" stroke-width="1"/><line x1="1059.06" y1="420.60" x2="1059.06" y2="639.00" stroke="#e7e7e7" stroke-width="1"/><line x1="1104.00" y1="420.60" x2="1104.00" y2="639.00" stroke="#e7e7e7" stroke-width="1"/><line x1="1148.94" y1="420.60" x2="1148.94" y2="639.00" stroke="#e7e7e7" stroke-width="1"/><rect x="654.05" y="508.48" width="14.30" height="130.52" fill="#aa00dd"/><rect x="654.05" y="465.24" width="14.30" height="43.24" fill="#80bbf5"/><rect x="698.99" y="526.57" width="14.30" height="112.43" fill="#aa00dd"/><rect x="698.99" y="489.35" width="14.30" height="37.22" fill="#80bbf5"/><rect x="743.93" y="534.08" width="14.30" height="104.92" fill="#aa00dd"/><rect x="743.93" y="498.96" width="14.30" height="35.12" fill="#80bbf5"/><rect x="788.87" y="567.19" width="14.30" height="71.81" fill="#aa00dd"/><rect x="788.87" y="543.08" width="14.30" height="24.11" fill="#80bbf5"/><rect x="833.81" y="598.81" width="14.30" height="40.19" fill="#aa00dd"/><rect x="833.81" y="584.75" width="14.30" height="14.06" fill="#80bbf5"/><rect x="878.75" y="616.90" width="14.30" height="22.10" fill="#aa00dd"/><rect x="878.75" y="609.91" width="14.30" height="6.99" fill="#80bbf5"/><rect x="923.69" y="632.01" width="14.30" height="6.99" fill="#aa00dd"/><rect x="923.69" y="629.48" width="14.30" height="2.53" fill="#80bbf5"/><rect x="968.63" y="629.22" width="14.30" height="9.78" fill="#aa00dd"/><rect x="968.63" y="625.98" width="14.30" height="3.23" fill="#80bbf5"/><rect x="1013.57" y="601.35" width="14.30" height="37.65" fill="#aa00dd"/><rect x="1013.57" y="588.77" width="14.30" height="12.58" fill="#80bbf5"/><rect x="1058.51" y="566.67" width="14.30" height="72.33" fill="#aa00dd"/><rect x="1058.51" y="542.64" width="14.30" height="24.02" fill="#80bbf5"/><rect x="1103.45" y="533.03" width="14.30" height="105.97" fill="#aa00dd"/><rect x="1103.45" y="497.91" width="14.30" height="35.12" fill="#80bbf5"/><rect x="1148.39" y="507.96" width="14.30" height="131.04" fill="#aa00dd"/><rect x="1148.39" y="463.76" width="14.30" height="44.20" fill="#80bbf5"/></svg><span class="t" id="t63" style="left:0.00px;top:633.30px;font-size:7.82px;line-height:12px;color:#666;left:auto;right:548.5px;text-align:right;">0</span><span class="t" id="t64" style="left:0.00px;top:589.62px;font-size:7.82px;line-height:12px;color:#666;left:auto;right:548.5px;text-align:right;">500</span><span class="t" id="t65" style="left:0.00px;top:545.94px;font-size:7.82px;line-height:12px;color:#666;left:auto;right:548.5px;text-align:right;">1000</span><span class="t" id="t66" style="left:0.00px;top:502.26px;font-size:7.82px;line-height:12px;color:#666;left:auto;right:548.5px;text-align:right;">1500</span><span class="t" id="t67" style="left:0.00px;top:458.58px;font-size:7.82px;line-height:12px;color:#666;left:auto;right:548.5px;text-align:right;">2000</span><span class="t" id="t68" style="left:0.00px;top:414.90px;font-size:7.82px;line-height:12px;color:#666;left:auto;right:548.5px;text-align:right;">2500</span><span class="t" id="t69" style="left:634.30px;top:642.20px;font-size:7.82px;line-height:12px;color:#666;width:40px;text-align:center;">0</span><span class="t" id="t70" style="left:679.24px;top:642.20px;font-size:7.82px;line-height:12px;color:#666;width:40px;text-align:center;">1</span><span class="t" id="t71" style="left:724.18px;top:642.20px;font-size:7.82px;line-height:12px;color:#666;width:40px;text-align:center;">2</span><span class="t" id="t72" style="left:769.12px;top:642.20px;font-size:7.82px;line-height:12px;color:#666;width:40px;text-align:center;">3</span><span class="t" id="t73" style="left:814.06px;top:642.20px;font-size:7.82px;line-height:12px;color:#666;width:40px;text-align:center;">4</span><span class="t" id="t74" style="left:859.00px;top:642.20px;font-size:7.82px;line-height:12px;color:#666;width:40px;text-align:center;">5</span><span class="t" id="t75" style="left:903.94px;top:642.20px;font-size:7.82px;line-height:12px;color:#666;width:40px;text-align:center;">6</span><span class="t" id="t76" style="left:948.88px;top:642.20px;font-size:7.82px;line-height:12px;color:#666;width:40px;text-align:center;">7</span><span class="t" id="t77" style="left:993.82px;top:642.20px;font-size:7.82px;line-height:12px;color:#666;width:40px;text-align:center;">8</span><span class="t" id="t78" style="left:1038.76px;top:642.20px;font-size:7.82px;line-height:12px;color:#666;width:40px;text-align:center;">9</span><span class="t" id="t79" style="left:1083.70px;top:642.20px;font-size:7.82px;line-height:12px;color:#666;width:40px;text-align:center;">10</span><span class="t" id="t80" style="left:1128.64px;top:642.20px;font-size:7.82px;line-height:12px;color:#666;width:40px;text-align:center;">11</span>
</body></html>
